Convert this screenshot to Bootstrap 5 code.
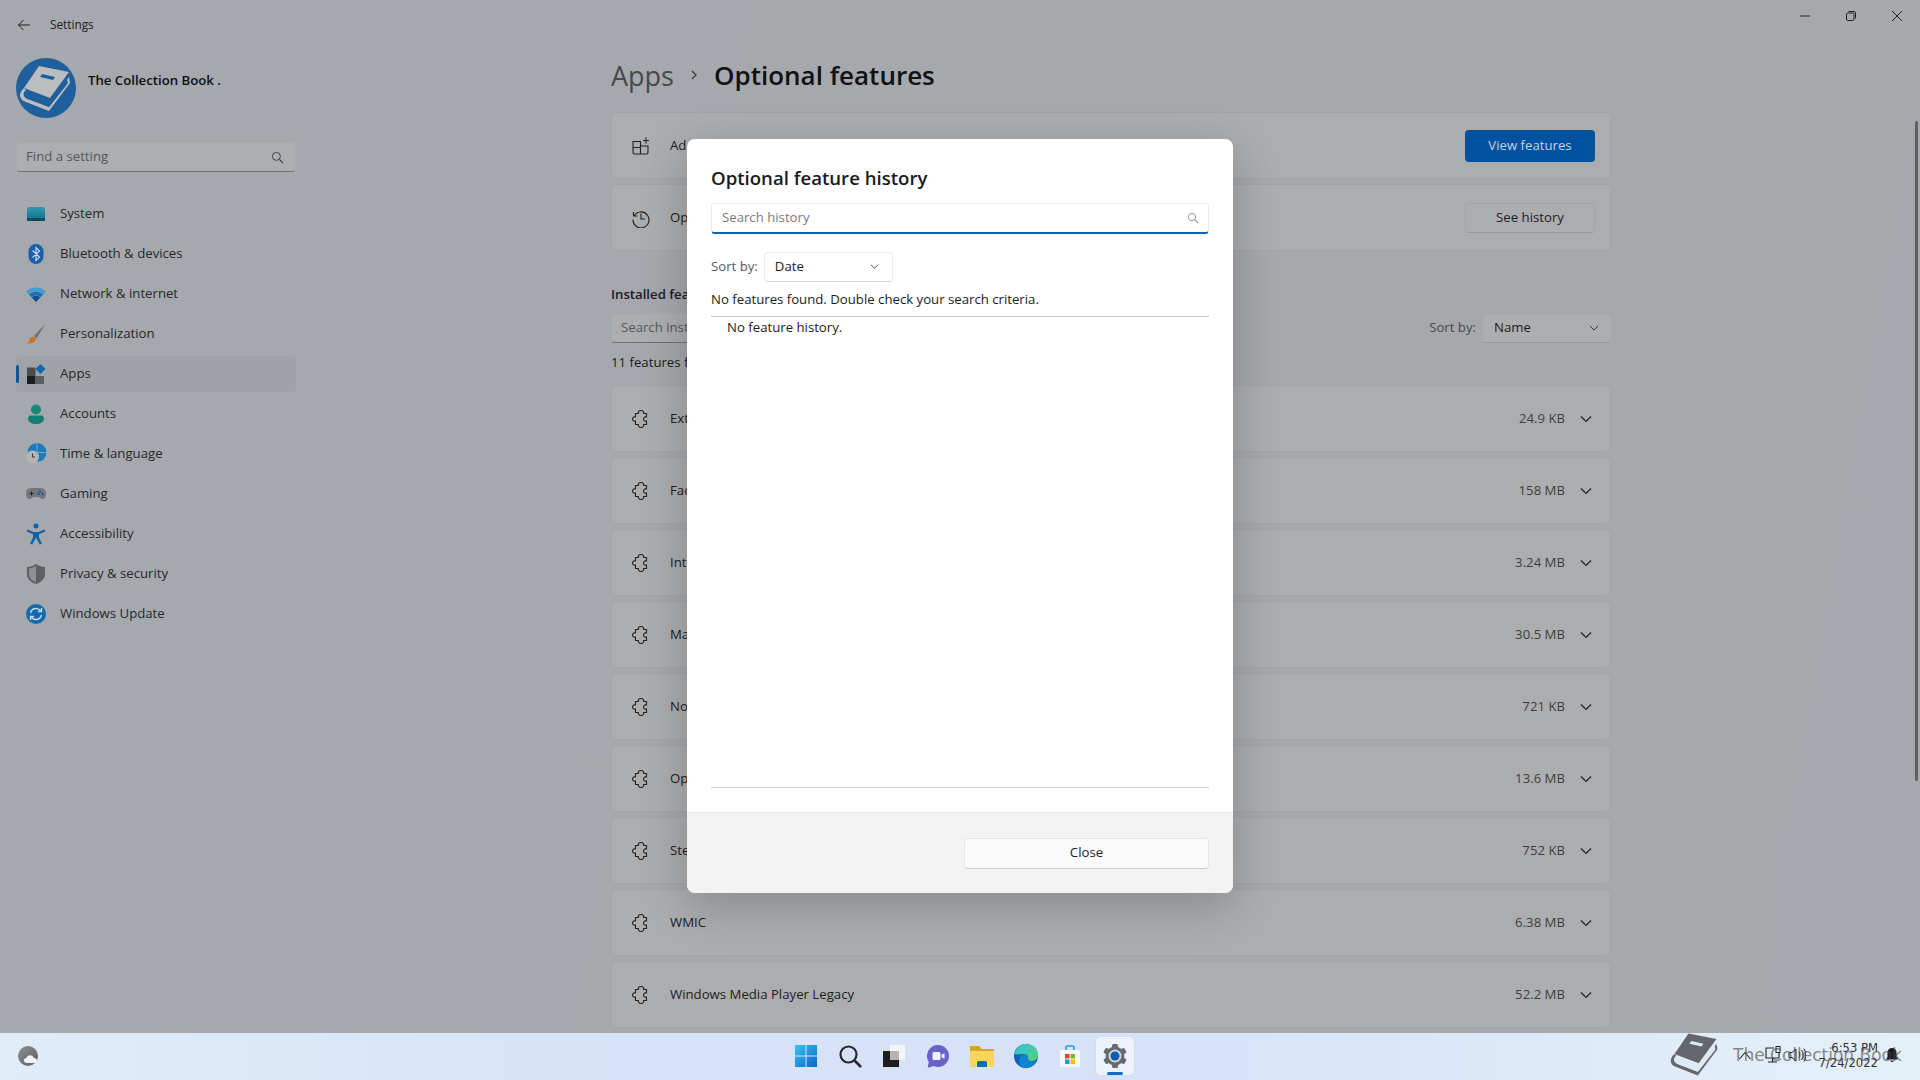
<!DOCTYPE html>
<html lang="en">
<head>
<meta charset="utf-8">
<title>Optional features</title>
<link href="https://cdn.jsdelivr.net/npm/bootstrap@5.3.0/dist/css/bootstrap.min.css" rel="stylesheet">
<style>
html,body{height:1080px;overflow:hidden}
body{font-family:"Open Sans","Liberation Sans",sans-serif;font-size:13.2px;color:#1b1c1d;background:#a5a8ac}
svg{display:block;flex:none}
.win{height:1033px;position:relative;background:linear-gradient(100deg,#a5a8ad 0%,#a6a8ac 60%,#a5a8ac 100%)}
.side{width:312px;padding:0 16px}
.titlebar{height:48px;font-size:11.8px;color:#202122;gap:18px;padding-top:1px}
.profile{height:69px;gap:12px;font-weight:600;font-size:13.2px;color:#0d0e0f;margin-top:5px;margin-bottom:20px}
.findbox{width:280px;height:30px;background:#acaeb0;border:1px solid #a7a9ac;border-bottom:1px solid #6f7174;border-radius:4px;padding:0 11px 0 9px;color:#55585b}
.navlist{margin-top:24px;width:280px}
.navitem{height:36px;margin-bottom:4px;border-radius:4px;color:#27282a;padding-left:8px;gap:12px;position:relative}
.navitem.on{background:#9fa2a7}
.navitem.on::before{content:"";position:absolute;left:0;top:9px;width:3px;height:18px;border-radius:2px;background:#0e5498}
.pane{width:1000px;margin-left:299px}
.heading{height:38px;margin-top:56px;margin-bottom:18px;gap:14px;font-size:26px;font-weight:600;color:#101112;line-height:1}
.heading .crumb{color:#46494d;font-weight:500;font-size:27px}
.rowcard{background:#abadaf;border:1px solid #a3a6a9;border-radius:5px;height:67px;margin-bottom:5px;padding:0 18px 0 19px;gap:15px}
.rowcard .grow{flex:1;min-width:0;margin-left:4px}
.rowcard .sz{color:#3d3f42}
.rowcard.top{padding-right:15px}
.feat-btn{height:32px;width:130px;border-radius:4px;font-size:13.2px;padding:0;display:flex;align-items:center;justify-content:center}
.feat-btn.blue{background:#00529e;color:#c5d3e2;border:0}
.feat-btn.grey{background:#acadae;color:#1b1c1d;border:1px solid #a1a3a6;border-bottom-color:#96989b;height:30px}
.inst-title{font-weight:600;margin-top:31px;height:24px;line-height:24px;font-size:13.2px}
.filter{height:30px;margin-top:7px}
.sinst{width:300px;height:30px;background:#acaeb0;border:1px solid #a6a8ab;border-bottom-color:#6f7174;border-radius:4px;padding-left:9px;color:#55585b}
.sel{height:30px;border:1px solid #a6a8ab;border-bottom-color:#96989b;border-radius:4px;background:#acaeb0;padding:0 11px;width:129px}
.sortlbl{color:#47494c;margin-right:6px}
.found{height:42px;line-height:39px}
.wctl{position:absolute;top:0;right:0;height:32px}
.wctl span{width:46px;height:32px;display:flex;align-items:center;justify-content:center}
.sbar{position:absolute;right:2px;top:121px;width:3px;height:660px;border-radius:2px;background:#5d6063}
.overlay{position:absolute;inset:0;display:flex;align-items:center;justify-content:center;padding-bottom:2px}
.dlg{width:546px;height:754px;background:#fff;border:0;border-radius:8px;box-shadow:0 12px 48px rgba(0,0,0,.22);overflow:hidden;display:flex;flex-direction:column}
.dlg-body{flex:1;padding:24px 24px 0;display:flex;flex-direction:column}
.dlg-title{font-size:18.6px;font-weight:600;line-height:30px;color:#1a1a1a;margin-bottom:10px}
.dlg-search{height:31px;border:1px solid #ececec;border-bottom:2px solid #0a62b5;border-radius:4px;padding:1px 9px 0 10px;color:#7b7b7b}
.dlg-sort{margin-top:18px;gap:6px;height:30px}
.dlg-sort .lab{color:#5b5b5b}
.dlg-sel{width:129px;height:30px;border:1px solid #ededed;border-bottom-color:#d6d6d6;border-radius:4px;padding:0 13px 0 10px;color:#1b1b1b}
.dlg-msg{height:35px;line-height:34px;border-bottom:1px solid #c8c8c8;color:#1b1b1b}
.dlg-list{height:471px;border-bottom:1px solid #cfcfcf;padding:0 16px;line-height:20px;color:#1b1b1b}
.dlg-foot{height:81px;background:#f3f3f3;border-top:1px solid #e7e7e7;padding:25px 24px 0;display:flex;justify-content:flex-end;align-items:flex-start}
.dlg-close{width:245px;height:31px;border:1px solid #e6e6e6;border-bottom-color:#cdcdcd;border-radius:4px;background:#fbfbfb;font-size:13.2px;color:#1b1b1b;padding:0}
.tbar{height:47px;display:grid;grid-template-columns:1fr auto 1fr;background:linear-gradient(90deg,#e0ecf8 0%,#d5e2f7 35%,#d6e2f8 60%,#e4f0f8 100%);position:relative}
.ticons{gap:6px;padding:0 0 2px 1px}
.tico{width:38px;height:38px;display:flex;align-items:center;justify-content:center;border-radius:4px;position:relative}
.tico.act{background:#eef3fb;box-shadow:0 0 1px rgba(0,0,0,.2);margin-left:1px}
.tico.act::after{content:"";position:absolute;left:11px;bottom:0;width:16px;height:3px;border-radius:2px;background:#0a6cc4}
.tray{position:absolute;right:0;top:-1px;height:47px;width:250px}
.ttime{position:absolute;right:42px;top:9px;font-family:"DejaVu Sans",sans-serif;font-size:11.6px;line-height:15px;text-align:right;color:#333}
.tmark{position:absolute;left:63px;top:11px;font-family:"DejaVu Sans",sans-serif;font-size:17px;line-height:24px;color:rgba(70,70,70,.62);white-space:nowrap}
.tglyph{position:absolute;top:11px}
</style>
</head>
<body>
<svg width="0" height="0" style="position:absolute">
 <defs>
  <symbol id="puz" viewBox="0 0 20 20"><path d="M4.500 4.500h3c-.5-1.500.5-3 2.500-3s3 1.500 2.500 3h3V8c-1.500-.5-3 .5-3 2s1.500 2.500 3 2v3.500h-3c.5 1.500-.5 3-2.500 3s-3-1.500-2.500-3h-3V12c-1.500.5-3-.5-3-2s1.500-2.500 3-2z" fill="none" stroke="#222" stroke-width="1.100" stroke-linejoin="round"/></symbol>
  <symbol id="chev" viewBox="0 0 12 12"><path d="M1 3.500l5 5 5-5" fill="none" stroke="currentColor" stroke-width="1.200"/></symbol>
  <symbol id="mag" viewBox="0 0 14 14"><circle cx="5.800" cy="5.800" r="4.300" fill="none" stroke="currentColor" stroke-width="1"/><path d="M9 9l4 4" stroke="currentColor" stroke-width="1.200"/></symbol>
  <symbol id="book" viewBox="0 0 60 60"><path d="M23 8L53 14 34 40 8 30z" fill="var(--bk,#bcbdbf)"/><path d="M8 30C2 35 3 42 10 44L33 53 54 25 53 19 51 22 52 25 33 49 12 41C7 39 6 35 10 32z" fill="var(--bk,#bcbdbf)"/><path d="M10 33L33 42 50 22 51 26 33 49 12 41C7 39 7 35 10 33z" fill="var(--bin,#1f5f9c)"/><path d="M26 16l13 3-2 3-13-3z" fill="var(--bin,#1f5f9c)"/></symbol>
 </defs>
</svg>

<div class="win d-flex">
 <aside class="side flex-shrink-0">
  <div class="titlebar d-flex align-items-center">
   <svg width="16" height="16" viewBox="0 0 16 16"><path d="M14 8H2.500M7.500 3L2.500 8l5 5" fill="none" stroke="#222" stroke-width="1"/></svg>
   <span>Settings</span>
  </div>
  <div class="profile d-flex align-items-center">
   <svg width="60" height="60" viewBox="0 0 60 60"><circle cx="30" cy="30" r="30" fill="#1f5f9c"/><use href="#book" width="60" height="60"/></svg>
   <span style="padding-bottom:14px">The Collection Book .</span>
  </div>
  <div class="findbox d-flex align-items-center justify-content-between"><span>Find a setting</span><svg width="13" height="13" color="#3a3c3f"><use href="#mag"/></svg></div>
  <nav class="navlist">
   <div class="navitem d-flex align-items-center"><svg width="24" height="24" viewBox="0 0 24 24"><defs><linearGradient id="g1" x1="0" y1="0" x2="0" y2="1"><stop offset="0" stop-color="#2f9cad"/><stop offset="1" stop-color="#0d6c8c"/></linearGradient></defs><rect x="3" y="5" width="18" height="14" rx="1.500" fill="url(#g1)"/><path d="M3 16h18v1.500a1.500 1.500 0 0 1-1.500 1.500h-15A1.500 1.500 0 0 1 3 17.500z" fill="#0f4462"/></svg><span>System</span></div>
   <div class="navitem d-flex align-items-center"><svg width="24" height="24" viewBox="0 0 24 24"><rect x="4.500" y="2" width="15" height="20" rx="7.500" fill="#1a5fae"/><path d="M8.500 8.500l7 6.500-3.500 3.500V5.500l3.500 3.500-7 6.500" fill="none" stroke="#cfdcea" stroke-width="1.100"/></svg><span>Bluetooth &amp; devices</span></div>
   <div class="navitem d-flex align-items-center"><svg width="24" height="24" viewBox="0 0 24 24"><path d="M2 9.500C8 4 16 4 22 9.500l-2.600 2.800C15 8 9 8 4.600 12.300z" fill="#3c9dd2"/><path d="M4.800 12.500c4.300-4 10.100-4 14.400 0l-2.700 2.800c-2.800-2.500-6.200-2.500-9 0z" fill="#1a6fb5"/><path d="M7.700 15.500c2.700-2.300 5.900-2.300 8.600 0L12 20z" fill="#0d4f96"/></svg><span>Network &amp; internet</span></div>
   <div class="navitem d-flex align-items-center"><svg width="24" height="24" viewBox="0 0 24 24"><path d="M21.500 1.500L10 14l2.500 2.500z" fill="#6f7073"/><path d="M9.500 14.500l2.500 2.500c-1 3-4.500 5-9 4.500 2-1 1.500-3 3-5 .8-1 2-1.800 3.500-2z" fill="#c9742d"/></svg><span>Personalization</span></div>
   <div class="navitem on d-flex align-items-center"><svg width="24" height="24" viewBox="0 0 24 24"><rect x="3" y="5.500" width="8.500" height="8.500" fill="#4a4c50"/><rect x="3" y="14" width="8.500" height="8" fill="#1d1e20"/><rect x="11.500" y="14" width="8.500" height="8" fill="#5d5f63"/><path d="M16.500 2l5 5-5 5-5-5z" fill="#1367ae"/></svg><span>Apps</span></div>
   <div class="navitem d-flex align-items-center"><svg width="24" height="24" viewBox="0 0 24 24"><circle cx="12" cy="7.500" r="5" fill="#158a74"/><path d="M4 16.500c0-2 1.500-3 3-3h10c1.500 0 3 1 3 3 0 3.500-3.500 5.500-8 5.500s-8-2-8-5.500z" fill="#0f8170"/></svg><span>Accounts</span></div>
   <div class="navitem d-flex align-items-center"><svg width="24" height="24" viewBox="0 0 24 24"><circle cx="13" cy="10.500" r="9.500" fill="#1c7ab8"/><path d="M13 1v19M3.500 10.500h19" stroke="#8fb3cc" stroke-width=".8"/><circle cx="8.500" cy="15" r="6.500" fill="#b5b6b8"/><path d="M8.500 11.500V15H11" fill="none" stroke="#333" stroke-width="1"/></svg><span>Time &amp; language</span></div>
   <div class="navitem d-flex align-items-center"><svg width="24" height="24" viewBox="0 0 24 24"><path d="M6.500 6h11c3 0 4.500 3 4.500 6s-1.500 5-3.500 5c-1.500 0-2.500-1-3.500-2h-6c-1 1-2 2-3.500 2C3.500 17 2 15 2 12s1.500-6 4.500-6z" fill="#73767b"/><path d="M5.500 11.500h4M7.500 9.500v4" stroke="#222" stroke-width="1"/><circle cx="16" cy="9.500" r="1.200" fill="#125ea3"/><circle cx="18.500" cy="12" r="1.200" fill="#125ea3"/><circle cx="14.500" cy="12" r="1.200" fill="#125ea3"/></svg><span>Gaming</span></div>
   <div class="navitem d-flex align-items-center"><svg width="24" height="24" viewBox="0 0 24 24"><circle cx="12" cy="4" r="2.500" fill="#1263a6"/><path d="M3.500 7.500l6 2.500h5l6-2.500.8 2-6.300 2.800v3.200l3 6.300-2.300.8-3.700-7-3.700 7-2.300-.8 3-6.300v-3.200L2.700 9.500z" fill="#1263a6"/></svg><span>Accessibility</span></div>
   <div class="navitem d-flex align-items-center"><svg width="24" height="24" viewBox="0 0 24 24"><path d="M12 2c3 2 6 3 9 3v7c0 5-4 8.500-9 10-5-1.500-9-5-9-10V5c3 0 6-1 9-3z" fill="#5c5f63"/><path d="M12 4c-2.500 1.500-5 2.500-7 2.500V12c0 4 3 6.800 7 8z" fill="#8e9093"/></svg><span>Privacy &amp; security</span></div>
   <div class="navitem d-flex align-items-center"><svg width="24" height="24" viewBox="0 0 24 24"><circle cx="12" cy="12" r="10" fill="#1369ad"/><path d="M6.500 11c.7-2.800 3-4.500 5.500-4.500 2 0 3.500.8 4.700 2.300M17.500 13c-.7 2.800-3 4.500-5.500 4.500-2 0-3.500-.8-4.700-2.300" fill="none" stroke="#c9d8e6" stroke-width="1.400"/><path d="M17.500 6v3.500H14M6.500 18v-3.500H10" fill="none" stroke="#c9d8e6" stroke-width="1.400"/></svg><span>Windows Update</span></div>
  </nav>
 </aside>

 <main class="pane">
  <div class="heading d-flex align-items-center"><span class="crumb">Apps</span><svg width="12" height="12" viewBox="0 0 12 12"><path d="M4 2l4 4-4 4" fill="none" stroke="#3c3e41" stroke-width="1.400"/></svg><span>Optional features</span></div>
  <div class="rowcard top d-flex align-items-center">
   <svg width="20" height="20" viewBox="0 0 20 20"><path d="M2 5.500h7.500V18H3.500A1.500 1.500 0 0 1 2 16.500zM9.500 10H17v6.500a1.500 1.500 0 0 1-1.500 1.500h-6M2 11.500h7.500M15 1.500v6M12 4.500h6" fill="none" stroke="#222" stroke-width="1.100"/></svg>
   <span class="grow">Add an optional feature</span>
   <button class="btn feat-btn blue" type="button">View features</button>
  </div>
  <div class="rowcard top d-flex align-items-center">
   <svg width="20" height="20" viewBox="0 0 20 20"><path d="M2.500 4v4h4M3 8a8 8 0 1 1-1 3.500M10 5.500V11h4" fill="none" stroke="#222" stroke-width="1.100"/></svg>
   <span class="grow">Optional feature history</span>
   <button class="btn feat-btn grey" type="button">See history</button>
  </div>
  <div class="inst-title">Installed features</div>
  <div class="filter d-flex align-items-center justify-content-between">
   <div class="sinst d-flex align-items-center">Search installed features</div>
   <div class="d-flex align-items-center"><span class="sortlbl">Sort by:</span><div class="sel d-flex align-items-center justify-content-between"><span>Name</span><svg width="10" height="10" color="#333"><use href="#chev"/></svg></div></div>
  </div>
  <div class="found">11 features found</div>
  <div class="rowcard d-flex align-items-center"><svg width="20" height="20"><use href="#puz"/></svg><span class="grow">Extended Theme Content</span><span class="sz">24.9 KB</span><svg width="12" height="12" color="#222"><use href="#chev"/></svg></div>
  <div class="rowcard d-flex align-items-center"><svg width="20" height="20"><use href="#puz"/></svg><span class="grow">Facial Recognition (Windows Hello)</span><span class="sz">158 MB</span><svg width="12" height="12" color="#222"><use href="#chev"/></svg></div>
  <div class="rowcard d-flex align-items-center"><svg width="20" height="20"><use href="#puz"/></svg><span class="grow">Internet Explorer mode</span><span class="sz">3.24 MB</span><svg width="12" height="12" color="#222"><use href="#chev"/></svg></div>
  <div class="rowcard d-flex align-items-center"><svg width="20" height="20"><use href="#puz"/></svg><span class="grow">Math Recognizer</span><span class="sz">30.5 MB</span><svg width="12" height="12" color="#222"><use href="#chev"/></svg></div>
  <div class="rowcard d-flex align-items-center"><svg width="20" height="20"><use href="#puz"/></svg><span class="grow">Notepad (system)</span><span class="sz">721 KB</span><svg width="12" height="12" color="#222"><use href="#chev"/></svg></div>
  <div class="rowcard d-flex align-items-center"><svg width="20" height="20"><use href="#puz"/></svg><span class="grow">OpenSSH Client</span><span class="sz">13.6 MB</span><svg width="12" height="12" color="#222"><use href="#chev"/></svg></div>
  <div class="rowcard d-flex align-items-center"><svg width="20" height="20"><use href="#puz"/></svg><span class="grow">Steps Recorder</span><span class="sz">752 KB</span><svg width="12" height="12" color="#222"><use href="#chev"/></svg></div>
  <div class="rowcard d-flex align-items-center"><svg width="20" height="20"><use href="#puz"/></svg><span class="grow">WMIC</span><span class="sz">6.38 MB</span><svg width="12" height="12" color="#222"><use href="#chev"/></svg></div>
  <div class="rowcard d-flex align-items-center"><svg width="20" height="20"><use href="#puz"/></svg><span class="grow">Windows Media Player Legacy</span><span class="sz">52.2 MB</span><svg width="12" height="12" color="#222"><use href="#chev"/></svg></div>
 </main>

 <div class="wctl d-flex">
  <span><svg width="12" height="12" viewBox="0 0 12 12"><path d="M1 6h10" stroke="#222" stroke-width="1"/></svg></span>
  <span><svg width="12" height="12" viewBox="0 0 12 12"><rect x="1.500" y="3" width="7.500" height="7.500" rx="1.500" fill="none" stroke="#222" stroke-width="1"/><path d="M3.500 1.500h5.500a1.500 1.500 0 0 1 1.500 1.500v5.500" fill="none" stroke="#222" stroke-width="1"/></svg></span>
  <span><svg width="12" height="12" viewBox="0 0 12 12"><path d="M1 1l10 10M11 1L1 11" stroke="#222" stroke-width="1"/></svg></span>
 </div>
 <div class="sbar"></div>

 <div class="overlay">
  <div class="modal-content dlg">
   <div class="dlg-body">
    <div class="dlg-title">Optional feature history</div>
    <div class="dlg-search d-flex align-items-center justify-content-between"><span>Search history</span><svg width="12" height="12" color="#8a8a8a"><use href="#mag"/></svg></div>
    <div class="dlg-sort d-flex align-items-center"><span class="lab">Sort by:</span><div class="dlg-sel d-flex align-items-center justify-content-between"><span>Date</span><svg width="9" height="9" color="#444"><use href="#chev"/></svg></div></div>
    <div class="dlg-msg">No features found. Double check your search criteria.</div>
    <div class="dlg-list">No feature history.</div>
   </div>
   <div class="dlg-foot"><button class="btn dlg-close" type="button">Close</button></div>
  </div>
 </div>
</div>

<footer class="tbar">
 <div class="d-flex align-items-center" style="padding-left:16px">
  <svg width="24" height="24" viewBox="0 0 24 24"><defs><linearGradient id="mo" x1="0" y1="0" x2="1" y2="1"><stop offset="0" stop-color="#8d8f92"/><stop offset="1" stop-color="#5f6265"/></linearGradient></defs><circle cx="12" cy="11" r="10" fill="url(#mo)"/><path d="M11 18c-2 0-3-1.200-3-2.500S9 13 10.500 13c.7-2 2.500-3 4.500-2.600 1.500.3 2.500 1.300 2.800 2.700 1.700 0 3.200 1 3.200 2.500S19.800 18 18 18z" fill="#f4f5f6"/></svg>
 </div>
 <div class="ticons d-flex align-items-center">
  <div class="tico"><svg width="24" height="24" viewBox="0 0 24 24"><defs><linearGradient id="w1" x1="0" y1="0" x2="1" y2="1"><stop offset="0" stop-color="#3dc0f2"/><stop offset="1" stop-color="#0669c5"/></linearGradient></defs><path d="M1 1h10.500v10.500H1zM12.500 1H23v10.500H12.500zM1 12.500h10.500V23H1zM12.500 12.500H23V23H12.500z" fill="url(#w1)"/></svg></div>
  <div class="tico"><svg width="24" height="24" viewBox="0 0 24 24"><circle cx="10.500" cy="10.500" r="8" fill="none" stroke="#2a2a2e" stroke-width="2.200"/><path d="M16.500 16.500L23 23" stroke="#2a2a2e" stroke-width="2.600"/></svg></div>
  <div class="tico"><svg width="24" height="24" viewBox="0 0 24 24"><rect x="8" y="1" width="15" height="15" fill="#f6f6f6"/><rect x="1" y="7" width="16" height="16" fill="#1d1d1d"/><rect x="8" y="7" width="9" height="9" fill="#b4b4b4"/></svg></div>
  <div class="tico"><svg width="24" height="24" viewBox="0 0 24 24"><path d="M12 1a11 11 0 0 1 0 22c-1.500 0-3-.3-4.300-.9L3 23.500c-.8.100-1.300-.5-1.200-1.200L2.800 18A11 11 0 0 1 12 1z" fill="#6a62c6"/><rect x="6.500" y="8" width="8" height="8" rx="1.500" fill="#f4f4fb"/><path d="M15.500 11l3-2v6l-3-2z" fill="#f4f4fb"/></svg></div>
  <div class="tico"><svg width="26" height="24" viewBox="0 0 26 24"><path d="M1 3a1 1 0 0 1 1-1h8l3 3h12v17a1 1 0 0 1-1 1H2a1 1 0 0 1-1-1z" fill="#d9a520"/><path d="M1 7h24v15a1 1 0 0 1-1 1H2a1 1 0 0 1-1-1z" fill="#f9d55b"/><path d="M8 23v-4.500a1.500 1.500 0 0 1 1.500-1.500h7a1.500 1.500 0 0 1 1.500 1.500V23z" fill="#0f6cbd"/></svg></div>
  <div class="tico"><svg width="26" height="26" viewBox="0 0 26 26"><defs><linearGradient id="e1" x1="0" y1="0" x2="1" y2="1"><stop offset="0" stop-color="#2fc0e8"/><stop offset="1" stop-color="#58d270"/></linearGradient></defs><circle cx="13" cy="13" r="12" fill="#0c63b4"/><path d="M1.500 11C3 5 8 1 13 1c7 0 12 5 12 11 0 4-3 6-6.500 6-3 0-4.500-1-4-3 .3-2-1-4-4-4-4 0-6 1-9.500 0z" fill="url(#e1)"/><path d="M15 25c-5 1-9-3-9-7 0-4 3-7 6-7 2 0 3 1 3 3 0 2 1 5 5 5 1 0 2-.2 3-.7-1.500 3.500-4.500 6-8 6.700z" fill="#0f85cf"/></svg></div>
  <div class="tico"><svg width="24" height="24" viewBox="0 0 24 24"><path d="M8 6V3.500A1.500 1.500 0 0 1 9.500 2h5A1.500 1.500 0 0 1 16 3.500V6" fill="none" stroke="#1aa0e0" stroke-width="1.600"/><rect x="2" y="6" width="20" height="17" rx="2" fill="#f7f7f7"/><rect x="7" y="10" width="4.500" height="4.500" fill="#e2451f"/><rect x="12.500" y="10" width="4.500" height="4.500" fill="#79b821"/><rect x="7" y="15.500" width="4.500" height="4.500" fill="#1a9be0"/><rect x="12.500" y="15.500" width="4.500" height="4.500" fill="#f6b900"/></svg></div>
  <div class="tico act"><svg width="26" height="26" viewBox="0 0 26 26"><g fill="#676a6e"><circle cx="13" cy="13" r="9.500"/><rect x="10" y="1" width="6" height="24" rx="1.500"/><rect x="10" y="1" width="6" height="24" rx="1.500" transform="rotate(60 13 13)"/><rect x="10" y="1" width="6" height="24" rx="1.500" transform="rotate(120 13 13)"/></g><circle cx="13" cy="13" r="6.500" fill="#cfd6df"/><circle cx="13" cy="13" r="4.500" fill="#0b5cad"/></svg></div>
 </div>
 <div></div>
 <div class="tray">
  <svg class="tglyph" style="left:-3px;top:-6px;--bk:#63666a;--bin:#dfe9f3" width="56" height="56"><use href="#book"/></svg>
  <svg class="tglyph" style="left:68px;top:17px" width="14" height="14" viewBox="0 0 14 14"><path d="M1.500 10L7 3.500l5.500 6.500" fill="none" stroke="#222" stroke-width="1.100"/></svg>
  <svg class="tglyph" style="left:93px;top:13px" width="20" height="20" viewBox="0 0 20 20"><path d="M11 3H3v10h13V8M9.500 13v4M5 17h9" fill="none" stroke="#222" stroke-width="1.100"/><rect x="13" y="1.500" width="4" height="6" fill="none" stroke="#222" stroke-width="1"/></svg>
  <svg class="tglyph" style="left:118px;top:14px" width="18" height="18" viewBox="0 0 18 18"><path d="M1 6.500v5h3l4 3.500V3L4 6.500zM11 6c1.200 1.800 1.200 4.200 0 6M13.500 4c2 2.800 2 7.200 0 10M15.800 2.500c2.600 3.800 2.600 9.200 0 13" fill="none" stroke="#222" stroke-width="1"/></svg>
  <div class="ttime">6:53 PM<br>7/24/2022</div>
  <svg class="tglyph" style="left:214px;top:15px" width="16" height="16" viewBox="0 0 16 16"><path d="M8 1a4.500 4.500 0 0 1 4.500 4.500V10l1.500 2.500H2L3.500 10V5.500A4.500 4.500 0 0 1 8 1zM6.500 13.500a1.500 1.500 0 0 0 3 0z" fill="#1d1d1d"/></svg>
  <div class="tmark">The Collection Book</div>
 </div>
</footer>
<script src="https://cdn.jsdelivr.net/npm/bootstrap@5.3.0/dist/js/bootstrap.bundle.min.js"></script>
</body>
</html>
